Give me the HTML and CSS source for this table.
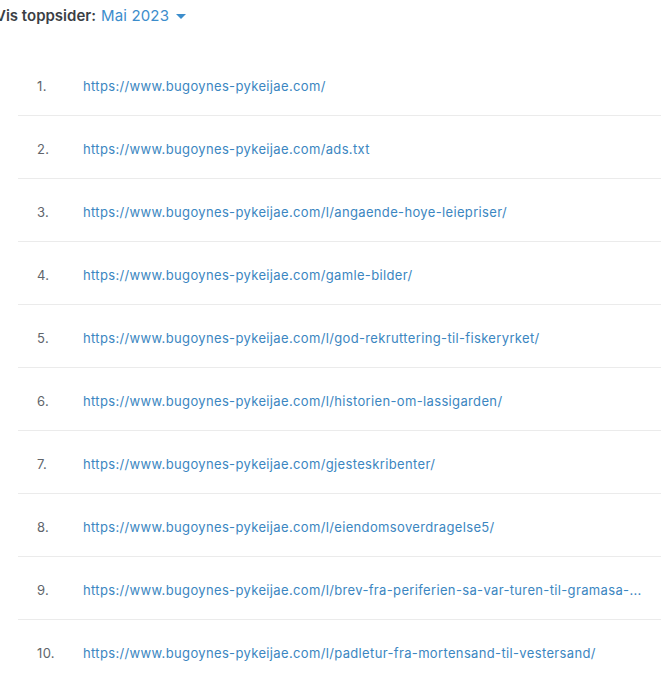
FILE: index.html
```html
<!DOCTYPE html>
<html>
<head>
<meta charset="utf-8">
<link rel="stylesheet" href="styles.css">
</head>
<body>
<div class="header">
  <span class="label">Vis toppsider:</span>
  <span class="period">Mai 2023<span class="caret"></span></span>
</div>
<ol class="pages">
  <li class="row"><span class="num">1.</span><a class="link">https://www.bugoynes-pykeijae.com/</a></li>
  <li class="row"><span class="num">2.</span><a class="link">https://www.bugoynes-pykeijae.com/ads.txt</a></li>
  <li class="row"><span class="num">3.</span><a class="link">https://www.bugoynes-pykeijae.com/l/angaende-hoye-leiepriser/</a></li>
  <li class="row"><span class="num">4.</span><a class="link">https://www.bugoynes-pykeijae.com/gamle-bilder/</a></li>
  <li class="row"><span class="num">5.</span><a class="link">https://www.bugoynes-pykeijae.com/l/god-rekruttering-til-fiskeryrket/</a></li>
  <li class="row"><span class="num">6.</span><a class="link">https://www.bugoynes-pykeijae.com/l/historien-om-lassigarden/</a></li>
  <li class="row"><span class="num">7.</span><a class="link">https://www.bugoynes-pykeijae.com/gjesteskribenter/</a></li>
  <li class="row"><span class="num">8.</span><a class="link">https://www.bugoynes-pykeijae.com/l/eiendomsoverdragelse5/</a></li>
  <li class="row"><span class="num">9.</span><a class="link">https://www.bugoynes-pykeijae.com/l/brev-fra-periferien-sa-var-turen-til-gramasa-...</a></li>
  <li class="row"><span class="num">10.</span><a class="link">https://www.bugoynes-pykeijae.com/l/padletur-fra-mortensand-til-vestersand/</a></li>
</ol>
</body>
</html>
```
FILE: styles.css
```css
html, body {
  margin: 0;
  padding: 0;
  background: #ffffff;
  overflow: hidden;
}
body {
  font-family: Inter, "Noto Sans", sans-serif;
  color: #444;
}
.header {
  margin-left: -5px;
  padding-top: 5px;
  height: 22px;
  font-size: 15px;
  line-height: 20px;
  display: flex;
  align-items: center;
  gap: 5px;
}
.label {
  font-weight: 600;
  color: #3b3f45;
}
.period {
  color: #3c8dcc;
  display: inline-flex;
  align-items: center;
  letter-spacing: 0.15px;
}
.caret {
  margin-left: 7px;
  width: 0;
  height: 0;
  border-left: 5px solid transparent;
  border-right: 5px solid transparent;
  border-top: 5px solid #3c8dcc;
}
.pages {
  list-style: none;
  margin: 26px 0 0 18px;
  padding: 0;
  width: 680px;
}
.row {
  display: flex;
  align-items: center;
  height: 58px;
  padding-top: 4px;
  border-bottom: 1px solid #ebebeb;
  font-size: 13px;
  letter-spacing: 0.35px;
}
.row:last-child {
  border-bottom: none;
}
.num {
  width: 46px;
  padding-left: 19px;
  color: #60656b;
  flex-shrink: 0;
}
.link {
  color: #3b86c1;
  text-decoration: none;
  white-space: nowrap;
}
```
